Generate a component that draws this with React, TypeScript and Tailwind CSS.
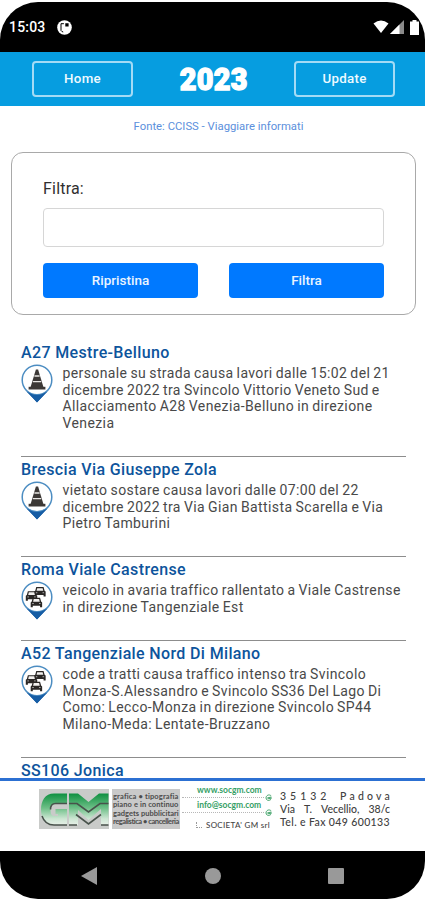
type IconKind = "cone" | "cars";

interface TrafficEvent {
  title: string;
  icon: IconKind;
  lines: string[];
  height: string;
}

const events: TrafficEvent[] = [
  {
    title: "A27 Mestre-Belluno",
    icon: "cone",
    lines: [
      "personale su strada causa lavori dalle 15:02 del 21",
      "dicembre 2022 tra Svincolo Vittorio Veneto Sud e",
      "Allacciamento A28 Venezia-Belluno in direzione",
      "Venezia",
    ],
    height: "h-[117px]",
  },
  {
    title: "Brescia Via Giuseppe Zola",
    icon: "cone",
    lines: [
      "vietato sostare causa lavori dalle 07:00 del 22",
      "dicembre 2022 tra Via Gian Battista Scarella e Via",
      "Pietro Tamburini",
    ],
    height: "h-[100px]",
  },
  {
    title: "Roma Viale Castrense",
    icon: "cars",
    lines: ["veicolo in avaria traffico rallentato a Viale Castrense", "in direzione Tangenziale Est"],
    height: "h-[84px]",
  },
  {
    title: "A52 Tangenziale Nord Di Milano",
    icon: "cars",
    lines: [
      "code a tratti causa traffico intenso tra Svincolo",
      "Monza-S.Alessandro e Svincolo SS36 Del Lago Di",
      "Como: Lecco-Monza in direzione Svincolo SP44",
      "Milano-Meda: Lentate-Bruzzano",
    ],
    height: "h-[117px]",
  },
];

const lastTitle = "SS106 Jonica";

function Cone() {
  return (
    <g>
      <path d="M14.9 5.500h2.200l5.400 17.700H9.500z" fill="#3c3836" />
      <path d="M7.600 22.800h16.800v2.700H7.600z" fill="#3c3836" />
      <path d="M13.400 12h5.200M11.800 17.600h8.400" stroke="#e8e6e4" strokeWidth="1.400" />
    </g>
  );
}

function Car({ x, y }: { x: number; y: number }) {
  return (
    <g transform={`translate(${x} ${y}) scale(1.04)`}>
      <path d="M2 .2h7l1 3.600 1 .8V9.300H9V7.900H2v1.400H0V4.600l1-.8z" fill="#2a2725" />
      <path d="M2.900 1.300h5.200l.6 2.600H2.300z" fill="#f2f0ee" />
      <path d="M1.500 5.700h1.500M8 5.700h1.500" stroke="#ddd" strokeWidth=".7" />
    </g>
  );
}

function Pin({ kind }: { kind: IconKind }) {
  return (
    <svg className="mt-[-1px] h-[39px] w-8 shrink-0" viewBox="0 0 32 39">
      <path d="M4 25.500Q16 31 28 25.500L16 38.500z" fill="#165da5" />
      <circle cx="16" cy="16" r="14.800" fill="#fff" stroke="#4c8dc2" strokeWidth="1.500" />
      <path d="M5.500 27.500C10 30 13 31 16 31S22 30 26.500 27.500L16 38.300z" fill="#165da5" />
      {kind === "cone" ? (
        <Cone />
      ) : (
        <g>
          <Car x={13.200} y={5.800} />
          <Car x={4.800} y={10} />
          <Car x={9.700} y={16.600} />
        </g>
      )}
    </svg>
  );
}

function StatusBar() {
  return (
    <div className="flex h-[50px] shrink-0 items-center bg-black pr-[6px] pl-[9px] text-white">
      <span className="text-[14px] font-medium tracking-[0.2px]">15:03</span>
      <svg className="ml-[11px] size-[15px]" viewBox="0 0 15 15">
        <circle cx="7.500" cy="7.500" r="7.300" fill="#fff" />
        <path d="M6.900 3.700H4v6.800q.8 1.300 2.200 1.500" fill="none" stroke="#000" strokeWidth="1" />
        <path d="M8.300 3.300h3.300v3.300H8.300z" fill="#000" />
      </svg>
      <svg className="mr-[1px] ml-auto h-[14px] w-4" viewBox="0 0 16 14">
        <path d="M.5 3.500Q8-2.500 15.500 3.500L8 13z" fill="#fff" />
      </svg>
      <svg className="size-[14px]" viewBox="0 0 14 14">
        <path d="M14 0v14H0z" fill="#8a8a8a" />
        <path d="M9.500 4.500V14H0z" fill="#fff" />
      </svg>
      <svg className="ml-[6px] h-[15px] w-[9px]" viewBox="0 0 9 15">
        <path d="M2.500 0h4v1.500H9V15H0V1.500h2.500z" fill="#fff" />
      </svg>
    </div>
  );
}

function Header() {
  const button =
    "h-9 w-[101px] rounded-[4px] border-2 border-[#a4dbf5] text-[13.300px] font-medium tracking-[0.3px] text-[#eefaff]";
  return (
    <header className="flex h-[54px] shrink-0 items-center justify-between bg-[#069de0] pr-[30px] pl-8">
      <button className={button}>Home</button>
      <h1 className="-mx-1 scale-x-[0.9] text-[32px] leading-none font-black tracking-[0.300px] text-white [-webkit-text-stroke:1.400px_white]">
        2023
      </h1>
      <button className={button}>Update</button>
    </header>
  );
}

function FilterBox() {
  const button = "h-[35px] w-[155px] rounded-[4px] bg-[#0079ff] text-[13.500px] font-medium text-[#e9f4ff]";
  return (
    <section className="mr-[9px] ml-[11px] h-[163px] shrink-0 rounded-[12px] border border-[#a9a9a9] px-[31px] pt-[24px]">
      <label className="block text-[16px] leading-6 tracking-[0.2px] text-[#303030]">Filtra:</label>
      <input className="mt-[7px] block h-[39px] w-[341px] rounded-[4px] border border-[#d6d6d6] bg-white" />
      <div className="mt-4 flex w-[341px] justify-between">
        <button className={button}>Ripristina</button>
        <button className={button}>Filtra</button>
      </div>
    </section>
  );
}

function EventTitle({ title }: { title: string }) {
  return (
    <h2 className="h-[25px] text-[16px] leading-[25px] font-medium tracking-[0.36px] whitespace-nowrap text-[#0d549c]">
      {title}
    </h2>
  );
}

function EventRow({ event }: { event: TrafficEvent }) {
  return (
    <article className={`${event.height} shrink-0 border-b border-[#8d8d8d]`}>
      <EventTitle title={event.title} />
      <div className="flex">
        <Pin kind={event.icon} />
        <p className="ml-[9.500px] text-[14px] leading-[16.600px] tracking-[0.39px] whitespace-nowrap text-[#494949] [word-spacing:-0.8px]">
          {event.lines.map((line) => (
            <span key={line} className="block">
              {line}
            </span>
          ))}
        </p>
      </div>
    </article>
  );
}

function GmLogo() {
  return (
    <svg className="h-10 w-[70px]" viewBox="0 0 70 40">
      <defs>
        <linearGradient id="gm" x1="0" y1="5" x2="0" y2="36" gradientUnits="userSpaceOnUse">
          <stop offset="0" stopColor="#129243" />
          <stop offset="0.45" stopColor="#6dbf87" />
          <stop offset="0.8" stopColor="#cde6d3" />
          <stop offset="1" stopColor="#e6efe7" />
        </linearGradient>
      </defs>
      <rect width="70" height="40" fill="#c9cbc9" />
      {/* logo mark */}
      <path
        d="M28 4.500H15C6 4.500 2 12 2 20.500S6 36 15 36h13V20H16.500v5H19v2h-4c-2.500 0-3.500-2.500-3.500-6s1.500-6 5-6H28z"
        fill="url(#gm)"
      />
      <path d="M28 14.500H16.500c-3.500 0-5 2.500-5 6M3 27c2 6 6 9 12 9h13" fill="none" stroke="#48524b" strokeWidth="1.500" />
      <path d="M30 4.500h9l10.500 8.500L60 4.500h9.500V36H62V20L49.500 31 39 21v15h-9z" fill="url(#gm)" />
      <path
        d="M30 14.500h8l11.500 8.500 11.500-8.500h8.500M37 25.500l12.500 9.500L62 25.500M30 36h8M62 36h7.500"
        fill="none"
        stroke="#48524b"
        strokeWidth="1.600"
      />
    </svg>
  );
}

function Fax() {
  return (
    <svg className="size-[7px]" viewBox="0 0 7 7">
      <path d="M6.300 2C4-.3 1 1.500 1 4s3 3 4.800 1.600M2.500 4l3.500-1v2z" fill="none" stroke="#43a36a" strokeWidth="1" />
    </svg>
  );
}

function Footer() {
  return (
    <footer className="z-10 flex h-[73px] shrink-0 border-t-[3px] border-[#2c70d2] bg-white pt-[7.500px] pl-[39px] font-['Lato',sans-serif]">
      <GmLogo />
      <div className="ml-[3px] flex h-10 w-[68px] flex-col justify-center bg-[#c9c9c9] pt-[2px] pl-[1px] text-[7.500px] leading-[8.500px] font-bold whitespace-nowrap text-[#4c4c4c]">
        <span className="tracking-[0.15px]">grafica • tipografia</span>
        <span className="tracking-[0.1px]">piano e in continuo</span>
        <span className="tracking-[0.02px]">gadgets pubblicitari</span>
        <span className="tracking-[-0.45px]">regalistica • cancelleria</span>
      </div>
      <div className="mt-[-4px] ml-[2px] h-[46px] w-[90px] text-[8.500px] font-bold text-[#35a065]">
        <div className="ml-[15px] h-[10px] leading-[10px]">www.socgm.com</div>
        <div className="flex h-[5px] items-center justify-between">
          <span className="w-[82px] border-t border-dotted border-[#b7b7b7]" />
          <Fax />
        </div>
        <div className="ml-[15px] h-[10px] leading-[10px]">info@socgm.com</div>
        <div className="flex h-[6px] items-center justify-between">
          <span className="w-[82px] border-t border-dotted border-[#b7b7b7]" />
          <Fax />
        </div>
        <div className="mt-[4px] flex items-center">
          <span className="ml-[14px] size-[6px] border-b border-l border-dotted border-[#999]" />
          <span className="ml-[4px] text-[8px] leading-[11px] font-medium tracking-[0.3px] whitespace-nowrap text-[#444]">
            SOCIETA' GM srl
          </span>
        </div>
      </div>
      <address className="mt-[1px] ml-[8px] w-[110px] text-[10.500px] leading-[13.200px] font-medium text-[#404040] not-italic">
        <div className="flex justify-between">
          <span className="tracking-[4px]">35132</span>
          <span className="-mr-[3px] tracking-[3.200px]">Padova</span>
        </div>
        <div className="flex justify-between">
          <span>Via</span>
          <span>T.</span>
          <span>Vecellio,</span>
          <span>38/c</span>
        </div>
        <div className="tracking-[0.37px] whitespace-nowrap">Tel. e Fax 049 600133</div>
      </address>
    </footer>
  );
}

function NavigationBar() {
  return (
    <nav className="flex h-12 shrink-0 items-center bg-black pt-[1px] pl-[81px]">
      <svg className="h-[18px] w-4" viewBox="0 0 16 18">
        <path d="M16 0v18L0 9z" fill="#999" />
      </svg>
      <span className="ml-[108px] size-4 rounded-full bg-[#999]" />
      <span className="ml-[107px] size-4 rounded-[1px] bg-[#999]" />
    </nav>
  );
}

export default function App() {
  return (
    <div className="h-[900px] w-[425px] overflow-hidden bg-white pt-[2px] font-['Roboto',sans-serif]">
      <div className="flex h-[897px] flex-col overflow-hidden rounded-[38px] bg-white">
        <StatusBar />
        <Header />
        <p className="h-[46px] shrink-0 pt-[12px] pl-[12px] text-center text-[11.300px] leading-[18px] text-[#5b8fdc]">
          Fonte: CCISS - Viaggiare informati
        </p>
        <FilterBox />
        <main className="mr-[19px] ml-[21px] flex min-h-0 flex-1 flex-col pt-[25px]">
          {events.map((event) => (
            <EventRow key={event.title} event={event} />
          ))}
          <EventTitle title={lastTitle} />
        </main>
        <Footer />
        <NavigationBar />
      </div>
    </div>
  );
}
